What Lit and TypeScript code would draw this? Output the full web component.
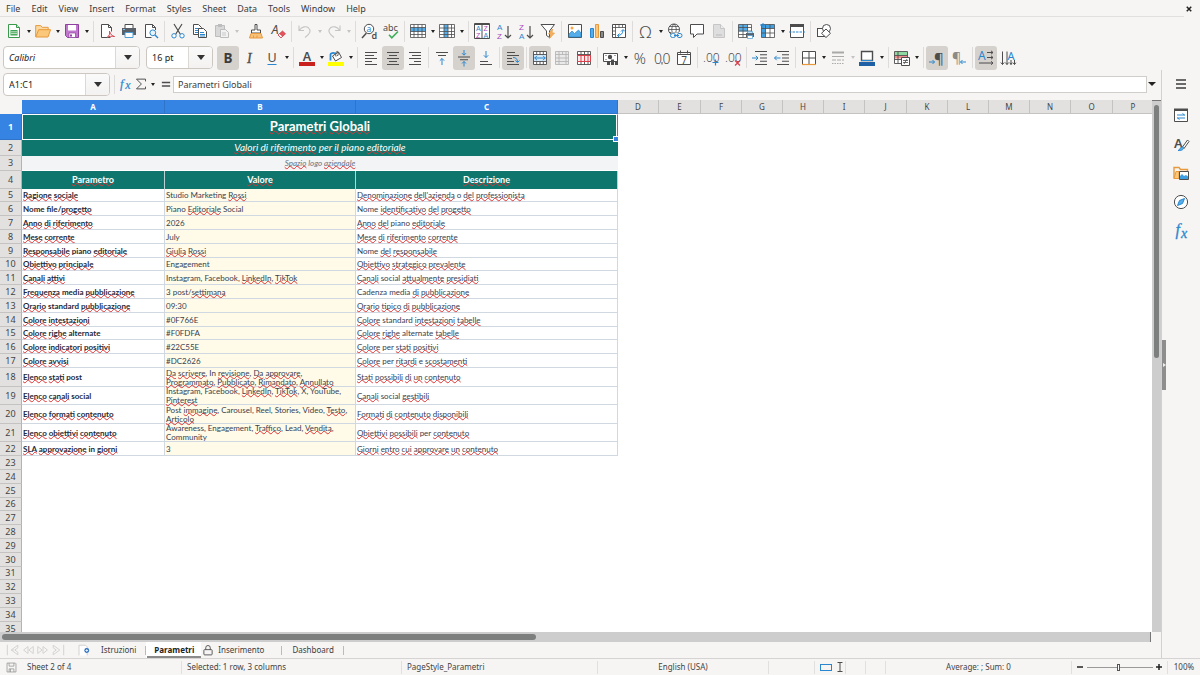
import { LitElement, html, css, svg, nothing, TemplateResult } from 'lit';
import { customElement, property, state } from 'lit/decorators.js';
import { classMap } from 'lit/directives/class-map.js';
import { styleMap } from 'lit/directives/style-map.js';

/* ---------- icons, all on a 16 x 16 grid ---------- */

const G = '#4d4d4d';
const B = '#2a87cf';
const P = '#a347ba';
const az = (a: string, b: string, ca: string, cb: string) => svg`
  <text x="1" y="7" font-size="8" font-family="Liberation Sans" fill=${ca}>${a}</text>
  <text x="1" y="16" font-size="8" font-family="Liberation Sans" fill=${cb}>${b}</text>
  <path d="M12 3v12M9 12l3 3 3-3" fill="none" stroke=${G} stroke-width="1.200"/>`;
const lines = (rows: [number, number, number][]) =>
  svg`<path d=${rows.map(([x, y, w]) => `M${x} ${y}h${w}`).join('')} fill="none" stroke=${G} stroke-width="1.1"/>`;

const ICONS: Record<string, TemplateResult<2>> = {
  new: svg`<path d="M2.500 1.500h8l3 3v10h-11z" fill="#fff" stroke="#3a9a4c"/><path d="M10.500 1.500v3h3" fill="#cfe8d2" stroke="#3a9a4c"/><path d="M4.500 7h7v5.500h-7z" fill="#3fa453"/><path d="M5 8.800h6M5 10.600h6" stroke="#fff" stroke-width=".7"/>`,
  open: svg`<path d="M.7 13.800V2.600h5l1.500 1.700h6v2.400" fill="#fbd9a0" stroke="#e8993b"/><path d="M.8 14 3.600 6.700h12L13 14z" fill="#fbc77b" stroke="#e8993b"/>`,
  save: svg`<path d="M1.500 1.500h13v13h-11l-2-2z" fill="#c078cc" stroke="#8f3fa0"/><path d="M4 2h8v5.500H4z" fill="#fff"/><path d="M5 10h6.500v4.500H5z" fill="#fff" stroke="#8f3fa0" stroke-width=".7"/><path d="M6 11.500h2v2H6z" fill="#8f3fa0"/>`,
  pdf: svg`<path d="M11.500 14.500h-9v-13h7l3 3v4" fill="#fff" stroke=${G}/><path d="M9.500 1.500v3h3" fill="none" stroke=${G}/><path d="M8 14.500c2.500-1.500 3-4 2.500-6.300 1 3.300 2.500 4.800 5 5.300-3-.7-5.500 0-7.500 1z" fill="#fff" stroke="#d9404c"/>`,
  print: svg`<path d="M4 5V1.500h8V5" fill="#fff" stroke=${G}/><path d="M1 5h14v7H1z" fill="#5a6068"/><path d="M4 9.500h8v5H4z" fill="#fff" stroke="#4c9bd4"/><path d="M2 6.500h2" stroke="#7fc0ee"/>`,
  preview: svg`<path d="M12.500 7V4.500l-3-3h-7v13h6" fill="#fff" stroke=${G}/><path d="M9.500 1.500v3h3" fill="none" stroke=${G}/><circle cx="9.800" cy="9.800" r="2.900" fill="#e8f3fb" stroke=${B}/><path d="m12 12 3 3" stroke=${B} stroke-width="1.400"/>`,
  cut: svg`<path d="m4 1 6.500 10.500M12 1 5.500 11.500" stroke=${G} stroke-width="1.200"/><circle cx="4" cy="12.800" r="2.200" fill="#fff" stroke=${B}/><circle cx="12" cy="12.800" r="2.200" fill="#fff" stroke=${B}/>`,
  copy: svg`<path d="M1.500 1.500h5l3 3v7h-8z" fill="#fff" stroke=${G}/><path d="M3 5.500h4M3 7.500h4M3 9.500h3" stroke=${B}/><path d="M6.500 5.500h5l3 3v6h-8z" fill="#fff" stroke=${G}/><path d="M8 9.500h4M8 11.500h5M8 13h5" stroke=${B}/>`,
  paste: svg`<path d="M1.500 2.500h9v11h-9z" fill="#d8d8d8" stroke="#bdbdbd"/><path d="M4 1h4v3H4z" fill="#bdbdbd"/><path d="M6.500 6.500h5l3 3v5h-8z" fill="#f2f2f2" stroke="#bdbdbd"/><path d="M8 10h4M8 12h4" stroke="#c9c9c9"/>`,
  brush: svg`<path d="M7 1.500h2V7h3.500v3h-9V7H7z" fill="#fff" stroke=${G}/><path d="M3 10.500h10L14.500 15h-13z" fill="#f9c27b" stroke="#e8993b"/><path d="M5.500 12.500V15M9 12.500V15" stroke="#e8993b"/>`,
  clear: svg`<text x="1.500" y="11" font-size="12.500" font-style="italic" font-family="Noto Sans" fill=${G}>A</text><path d="m8 12 4.500-4 3 2.800-4.500 4z" fill="#e8515a" stroke="#c23540" stroke-width=".7"/><path d="m8 12 1.600-1.400 3 2.700L11 14.800z" fill="#fff" stroke="#c23540" stroke-width=".7"/>`,
  undo: svg`<path d="M2 2.500v5h5M2.300 7.300C5 3.500 9 2.800 11.500 4.800c2.800 2.400 2 6-3.500 9.700" fill="none" stroke="#c4c4c4" stroke-width="1.100"/>`,
  redo: svg`<path d="M14 2.500v5H9M13.700 7.300C11 3.500 7 2.800 4.500 4.800c-2.800 2.400-2 6 3.500 9.700" fill="none" stroke="#c4c4c4" stroke-width="1.100"/>`,
  find: svg`<path d="M1 15l4.300-4.700" stroke=${G} stroke-width="1.500"/><circle cx="8" cy="6" r="4.700" fill="#fff" stroke=${G}/><text x="5.600" y="8.600" font-size="8.500" font-family="Noto Sans" fill=${B}>a</text><text x="10.400" y="15.500" font-size="9" font-weight="600" font-family="Noto Sans" fill=${G}>d</text>`,
  spell: svg`<text x="0" y="7.500" font-size="9" font-family="Noto Sans" fill=${G}>abc</text><path d="m6 11.800 2.800 3L15 8.500" fill="none" stroke="#3fae5a" stroke-width="1.600"/>`,
  row: svg`<path d="M.5 1.500h15v13H.5z" fill="#fff"/><path d="M.5 4.500h15v4H.5z" fill="#55aeea"/><path d="M.5 1.500h15v13H.5zM.5 4.500h15M.5 8.500h15M.5 11.500h15M4 1.500v13M8 1.500v13M12 1.500v13" fill="none" stroke=${G} stroke-width=".8"/>`,
  col: svg`<path d="M.5 1.500h15v13H.5z" fill="#fff"/><path d="M5 1.500h4v13H5z" fill="#55aeea"/><path d="M.5 1.500h15v13H.5zM.5 5h15M.5 8.500h15M.5 11.500h15M5 1.500v13M9 1.500v13M12.500 1.500v13" fill="none" stroke=${G} stroke-width=".8"/>`,
  sort: svg`<path d="M.5.500h15v15H.5z" fill="#fff" stroke=${G}/><path d="M.5 1.500h15M8 .5v15" stroke=${G}/><text x="2" y="8" font-size="7" font-family="Liberation Sans" fill=${B}>A</text><text x="2" y="15" font-size="7" font-family="Liberation Sans" fill=${P}>Z</text><text x="9.600" y="8" font-size="7" font-family="Liberation Sans" fill=${P}>Z</text><text x="9.600" y="15" font-size="7" font-family="Liberation Sans" fill=${B}>A</text>`,
  asc: az('A', 'Z', B, P),
  desc: az('Z', 'A', P, B),
  filter: svg`<path d="M1 1.500h13.500L9.500 8v6.500l-3-2V8z" fill="#fff" stroke=${G}/><path d="M12.500 6 8.500 11h2.500l-1.500 4.500L14.500 10H12z" fill="#f9b25c" stroke="#e8993b" stroke-width=".7"/>`,
  image: svg`<path d="M1.500 1.500h13v13h-13z" fill="#fff" stroke=${G}/><circle cx="5" cy="5" r="1.500" fill="#f6a848"/><path d="M2 14V11l3-3 2.500 2.500L11.500 7 14 10v4z" fill="#55aeea" stroke=${B} stroke-width=".7"/>`,
  chart: svg`<path d="M1.500 5.500h3v9h-3z" fill="#55aeea" stroke=${B}/><path d="M6.500 1.500h3v13h-3z" fill="#fbc77b" stroke="#e8993b"/><path d="M11.500 8.500h3v6h-3z" fill="#8a8a8a" stroke=${G}/>`,
  pivot: svg`<path d="M1.500 1.500h13v13h-13z" fill="#fff" stroke=${G}/><path d="M1.500 4.500h13M4.500 1.500v13M8 1.500v3M11.500 1.500v3M1.500 8h3M1.500 11.500h3" stroke=${G} stroke-width=".8"/><path d="M6.500 12.500c3.500 0 5.500-2 5.500-5.500M10 8.500 12 6.500l2 2M8.500 10.500l-2 2 2 2" fill="none" stroke=${B}/>`,
  omega: svg`<text x="1.500" y="14.500" font-size="17" font-family="Noto Sans" font-weight="300" fill=${G}>Ω</text>`,
  link: svg`<circle cx="7" cy="6.500" r="5.500" fill="#fff" stroke=${G}/><path d="M1.500 6.500h11M2.500 3.500h9M2.500 9.500h9M7 1c-3 3-3 8 0 11M7 1c3 3 3 8 0 11" fill="none" stroke=${G} stroke-width=".8"/><path d="M4 9.500h11.500V16H4z" fill="#f6f5f4"/><rect x="3.500" y="10.500" width="5" height="4" rx="2" fill="none" stroke=${B}/><rect x="10" y="10.500" width="5" height="4" rx="2" fill="none" stroke=${B}/><path d="M7 12.500h5" stroke=${B}/>`,
  comment: svg`<path d="M1.500 1.500h13v9.500H8l-3.500 3.500V11h-3z" fill="#fff" stroke=${G}/>`,
  header: svg`<path d="M2.500 1.500h7l4 4v9h-11z" fill="#dedede" stroke="#c6c6c6"/><path d="M9.500 1.500v4h4" fill="#eee" stroke="#c6c6c6"/><path d="M5 12h6" stroke="#bbb"/>`,
  parea: svg`<path d="M.5 1.500h13v13H.5z" fill="#fff"/><path d="M.5 1.500h9v7h-9z" fill="#55aeea"/><path d="M.5 1.500h13v13H.5zM.5 4.500h13M.5 8h13M.5 11.500h13M5 1.500v13M9.500 1.500v13" fill="none" stroke=${G} stroke-width=".8"/><path d="M8 10h8v4H8z" fill="#5a6068"/><path d="M9.500 8.500h5V10h-5zM9.500 12.500h5v3h-5z" fill="#fff" stroke="#4c9bd4" stroke-width=".7"/>`,
  freeze: svg`<path d="M1.500 1.500h13v13h-13z" fill="#fff"/><path d="M1.500 1.500h13v4h-9v9h-4z" fill="#3f9fe2"/><path d="M1.500 1.500h13v13h-13zM1.500 5.500h13M1.500 10h13M5.500 1.500v13M10 1.500v13" fill="none" stroke=${G} stroke-width=".8"/><path d="M0 2h6M3 0v5" stroke=${B}/>`,
  split: svg`<path d="M1.500 2.500h13v12h-13z" fill="#fff" stroke=${G}/><path d="M1 1h14v3H1z" fill=${G}/><path d="M0 9h16" stroke=${B} stroke-dasharray="2.500 1"/>`,
  shapes: svg`<rect x="1.500" y="5.500" width="7" height="8" fill="#fff" stroke=${G}/><circle cx="10.500" cy="5.500" r="4" fill="#fff" stroke=${G}/><path d="m10 6 4.500 4.300-4.500 4.200-4.500-4.200z" fill="#fff" stroke=${G}/>`,

  bold: svg`<text x="3.500" y="13" font-size="13.500" font-weight="700" font-family="Noto Sans" fill="#3c3c3c">B</text>`,
  italic: svg`<text x="5" y="13" font-size="14" font-style="italic" font-family="Liberation Serif" fill=${G} stroke=${G} stroke-width=".3">I</text>`,
  underline: svg`<text x="3.500" y="12" font-size="12.500" font-family="Noto Sans" fill=${G}>U</text><path d="M3.500 14.500h9" stroke=${B}/>`,
  fontcolor: svg`<text x="3.800" y="10.500" font-size="12.500" font-weight="600" font-family="Noto Sans" fill=${G}>A</text><path d="M0 12h16v4H0z" fill="#c9211e"/>`,
  fill: svg`<path d="m4.500 6 6-4 3 5.500-6 3.500z" fill="#fff" stroke=${G}/><path d="M8 6.500C7 3 8.500 1 9.500 1.500s1 2.500 0 4.500" fill="none" stroke=${G}/><path d="M2.500 10.500V4.500c0-1.500 3-2 4.500-1" fill="none" stroke=${B} stroke-width="1.800"/><path d="M0 12h16v4H0z" fill="#ff0"/>`,
  left: lines([[2, 2.5, 12], [2, 5.5, 9], [2, 8.5, 12], [2, 11.5, 7], [2, 14.5, 12]]),
  center: lines([[2, 2.5, 12], [4, 5.5, 8], [2, 8.5, 12], [4, 11.5, 8], [2, 14.5, 12]]),
  right: lines([[2, 2.5, 12], [5, 5.5, 9], [2, 8.5, 12], [7, 11.5, 7], [2, 14.5, 12]]),
  top: svg`${lines([[2, 2.5, 12], [4, 5.5, 8]])}<path d="M8 15V8.500M5.800 10.700 8 8.500l2.200 2.200" fill="none" stroke=${B}/>`,
  middle: svg`${lines([[2, 7, 12], [4, 9.8, 8]])}<path d="M8 0v5M6 3.200l2 2 2-2M8 16.500v-5M6 13.500l2-2 2 2" fill="none" stroke=${B}/>`,
  bottom: svg`${lines([[2, 11.5, 8], [2, 14.500, 12]])}<path d="M8 1v6.500M5.800 5.300 8 7.500l2.200-2.200" fill="none" stroke=${B}/>`,
  wrap: svg`${lines([[2, 2.5, 8], [2, 5.5, 12], [2, 8.5, 5], [2, 11.5, 7], [2, 14.5, 12]])}<path d="M8 7.500c3 0 4.500 1.500 4.500 4.500M10.300 10.500l2.200 2 2-2" fill="none" stroke=${B}/>`,
  merge: svg`<path d="M1.500 1.500h13v13h-13z" fill="#fff"/><path d="M1.500 1.500h13v13h-13zM1.500 4.500h13M1.500 11.500h13M4.700 1.500v3M8 1.500v3M11.300 1.500v3M4.700 11.500v3M8 11.500v3M11.300 11.500v3" fill="none" stroke=${G} stroke-width=".9"/><path d="M2 5h12v6H2z" fill="#cfe7f8"/><path d="M2.500 8h11M5 5.800 2.800 8 5 10.200M11 5.800 13.200 8 11 10.200" fill="none" stroke=${B}/>`,
  mergecells: svg`<path d="M1.500 1.500h13v13h-13zM1.500 4.500h13M1.500 8h13M1.500 11.500h13M5 1.500v13M8.500 1.500v3M12 1.500v13" fill="#e9e9e9" stroke="#b5b5b5" stroke-width=".9"/>`,
  unmerge: svg`<path d="M1.500 1.500h13v13h-13z" fill="#fff"/><path d="M1.500 1.500h13v13h-13zM1.500 4.500h13M5 1.500v3M8.500 1.500v3M12 1.500v3M5 12v2.500M8.500 12v2.500M12 12v2.500" fill="none" stroke=${G} stroke-width=".9"/><path d="M1.500 5.500h13v6h-13zM5 5.500v6M8.500 5.500v6M12 5.500v6" fill="#fdecec" stroke="#d9404c"/>`,
  currency: svg`<path d="M.5 3.500h14v8H.5z" fill="#fff" stroke=${G}/><circle cx="7" cy="7" r="2.200" fill=${G}/><path d="M2.500 5.500h1M11.500 5.500h1M2.500 9.500h1" stroke=${G}/><path d="M4 12h3v3H4zM8 9.500h3V15H8zM12 11h3v4h-3z" fill=${G}/>`,
  percent: svg`<text x="1.800" y="13.500" font-size="15" font-family="Noto Sans" font-weight="300" fill=${G}>%</text>`,
  number: svg`<text x="0" y="13.500" font-size="14" font-family="Noto Sans" font-weight="300" fill=${G}>0</text><text x="8.500" y="13.500" font-size="14" font-family="Noto Sans" font-weight="300" fill=${G}>0</text><path d="M8 12v2.500" stroke=${G}/>`,
  date: svg`<path d="M1.500 2.500h13v12h-13z" fill="#fff" stroke=${G}/><path d="M1.500 4.500h13M4.500.5v3M11.500.5v3" stroke=${G}/><text x="5.200" y="13.600" font-size="10" font-family="Noto Sans" fill=${G}>7</text>`,
  adddec: svg`<text x="0" y="12" font-size="12" font-family="Noto Sans" font-weight="300" fill=${G}>.00</text><path d="M12.500 9.500v6M9.500 12.500h6" stroke=${B} stroke-width="1.200"/>`,
  deldec: svg`<text x="0" y="12" font-size="12" font-family="Noto Sans" font-weight="300" fill=${G}>.00</text><path d="m10 10.500 5 5M15 10.500l-5 5" stroke="#d9404c" stroke-width="1.200"/>`,
  indent: svg`${lines([[3, 1.5, 12], [8, 4.800, 7], [8, 8, 7], [8, 11.2, 7], [3, 14.5, 12]])}<path d="M0 8h6M3.800 5.800 6 8l-2.200 2.200" fill="none" stroke=${B}/>`,
  outdent: svg`${lines([[3, 1.5, 12], [8, 4.800, 7], [8, 8, 7], [8, 11.2, 7], [3, 14.5, 12]])}<path d="M.5 8h6M2.700 5.800.5 8l2.200 2.200" fill="none" stroke=${B}/>`,
  border: svg`<path d="M1.500 14V1.500h13V14M8 1.500v13M1.500 8h13" fill="#fff" stroke=${G}/><path d="M1 14.500h14" stroke="#e8993b" stroke-width="1.200"/>`,
  bstyle: svg`<path d="M2 1.500h12v2H2z" fill="#a9a9a9"/><path d="M2 6.500h12" stroke="#aaa"/><path d="M2 10h12" stroke="#aaa" stroke-dasharray="4 1"/><path d="M2 13.500h12" stroke="#aaa" stroke-dasharray="1.500 1"/>`,
  bcolor: svg`<path d="M2.500 1.500h11v9h-11z" fill="#fff" stroke=${G} stroke-width="1.400"/><path d="M2.500 10.500h11" stroke=${B}/><path d="M0 12h16v4H0z" fill="#1f5fa6"/>`,
  cond: svg`<path d="M.5 1.500h13v12H.5z" fill="#fff"/><path d="M1 2h12v3H1z" fill="#8ed8a0"/><path d="M1 5.500h12v3H1z" fill="#f28b8b"/><path d="M.5 1.500h13v12H.5zM.5 5.500h13M.5 9.500h13M4 1.500v12" fill="none" stroke=${G} stroke-width=".9"/><path d="M7.500 7.500h8v8h-8z" fill="#fff" stroke=${G}/><path d="M9 10.500h5M9 12.500h5M13 9l-3 5" stroke=${G} stroke-width=".8"/>`,
  ltr: svg`<text x="5" y="13.500" font-size="15" font-family="Noto Sans" fill=${G}>¶</text><path d="M0 12h5.500M3.500 10l2 2-2 2" fill="none" stroke=${B}/>`,
  rtl: svg`<text x="1" y="13" font-size="14" font-family="Noto Sans" fill="#8a8a8a">¶</text><path d="M15 12H9.500M11.500 10l-2 2 2 2" fill="none" stroke=${B}/>`,
  horiz: svg`<text x="0" y="9.500" font-size="12" font-family="Noto Sans" fill=${B}>A</text><path d="M9 2.500h6M9 7.500h6M1 13h14M13 .8l2 1.700-2 1.700M13 5.800l2 1.700-2 1.700M13 11.300l2 1.700-2 1.700" fill="none" stroke=${G}/>`,
  vert: svg`<text x="7.500" y="9.500" font-size="11" font-family="Noto Sans" fill=${B}>A</text><path d="M2.500 1.500v13M7 1.500v13M11 10v4.500M14.500 10v4.500M.8 12.500l1.700 2 1.700-2M5.300 12.500l1.700 2 1.700-2M9.800 12.700l1.200 1.800 1.200-1.800M13 12.700l1.500 1.800 1.400-1.800" fill="none" stroke=${G}/>`,

  fx: svg`<text x="0" y="13" font-size="17" font-style="italic" font-family="Liberation Serif" fill=${B} stroke=${B} stroke-width=".3">f</text><text x="7" y="15" font-size="16" font-style="italic" font-family="Liberation Serif" fill=${B} stroke=${B} stroke-width=".3">x</text>`,
  sigma: svg`<path d="M14 4.500V1.500H2L8.500 8 2 14.500h12v-3" fill="none" stroke=${G} stroke-width="1.300"/>`,
  equals: svg`<path d="M2.500 6h11M2.500 10.500h11" stroke=${G} stroke-width="2"/>`,
  menu: svg`<path d="M3 4h10M3 8h10M3 12h10" stroke="#3c3c3c" stroke-width="1.400"/>`,
  props: svg`<path d="M1.500 2.500h13v12h-13z" fill="#fff" stroke=${G}/><path d="M1 1.500h14v2.500H1z" fill=${G}/><path d="M4 8h8M4 11h8M9.500 6.500l2 1.500M6.500 12.500l-2-1.500" stroke=${B}/>`,
  styles: svg`<text x="1" y="11.500" font-size="13" font-weight="600" font-family="Noto Sans" fill=${G}>A</text><path d="m14.500 4-5 7 1.500 1.500 5-7z" fill="#fff" stroke=${G}/><path d="M5 14.500c2 0 2-4 4.500-3.500 2 .7 1 4-4.500 3.500z" fill="#55aeea" stroke=${B}/>`,
  gallery: svg`<path d="M1 13.500v-11h5l1.500 2h7v2" fill="none" stroke="#e8993b" stroke-width="1.400"/><path d="M1 13.500 3 6.500h3v7z" fill="#fbc77b" stroke="#e8993b"/><path d="M6.500 6.500h9v8h-9z" fill="#fff" stroke=${G}/><path d="M7 14v-3l2-2 2 2 2-1 2 1.500V14z" fill="#3f9fe2"/>`,
  navigator: svg`<circle cx="8" cy="8" r="6.600" fill="#fff" stroke=${G}/><path d="m11.500 4.500-2 5-5 2 2-5z" fill="#55aeea" stroke=${B}/>`,
  fxbig: svg`<text x="2.500" y="12" font-size="16" font-style="italic" font-family="Liberation Serif" fill=${B} stroke=${B} stroke-width=".3">f</text><text x="8" y="14.500" font-size="14" font-style="italic" font-family="Liberation Serif" fill=${B} stroke=${B} stroke-width=".3">x</text>`,

  first: svg`<path d="M1.500 2v12M13.500 2.500 6 8l7.500 5.500v-3L10 8l3.500-2.500zM6 8h3" fill="none" stroke="#cfcecd"/>`,
  prev: svg`<path d="m8 4-5 4 5 4zM14 4 9 8l5 4z" fill="none" stroke="#cfcecd"/>`,
  next: svg`<path d="m2 4 5 4-5 4zM8 4l5 4-5 4z" fill="none" stroke="#cfcecd"/>`,
  last: svg`<path d="M14.500 2v12M2.500 2.500 10 8l-7.500 5.500v-3L6 8 2.500 5.500z" fill="none" stroke="#cfcecd"/>`,
  addsheet: svg`<path d="M2.500 14V1.500h8l2 2V14" fill="#fff" stroke="#c9c8c7"/><circle cx="12" cy="8" r="3" fill="#2a6fbf"/><path d="M12 6.300v3.400M10.300 8h3.400" stroke="#fff"/>`,
  lock: svg`<rect x="2.500" y="7.500" width="11" height="7" rx="1" fill="none" stroke=${G} stroke-width="1.200"/><path d="M5 7.500V5a3 3 0 0 1 6 0v2.500" fill="none" stroke=${G} stroke-width="1.200"/>`,
  doc: svg`<path d="M1.500 1.500h12l1 1v12h-13z" fill="none" stroke="#8a8a8a"/><path d="M4.500 1.500v4.500h7V1.500M4.500 14.500V10h7v4.500M6.500 10v4.500" fill="none" stroke="#8a8a8a"/>`,
};

const icon = (name: string) => html`<svg class="ico" viewBox="0 0 16 16" aria-hidden="true">${ICONS[name]}</svg>`;

/* ---------- toolbars: "name" is a button, "+" adds an arrow, "!" is pressed, "-" is disabled, "|" divides, " " is a gap ---------- */

const STANDARD = ['new+', 'open+', 'save+', '|', 'pdf', 'print', 'preview', '|', 'cut', 'copy', 'paste+-', ' ', 'brush', 'clear', '|',
  'undo+-', 'redo+-', '|', 'find', 'spell', '|', 'row+', 'col+', '|', 'sort', 'asc', 'desc', 'filter', '|', 'image', 'chart', 'pivot', '|',
  'omega+', 'link', 'comment', 'header-', '|', 'parea', 'freeze+', 'split', '|', 'shapes'];

const FORMATTING = ['bold!', 'italic', 'underline+', '|', 'fontcolor+', 'fill+', '|', 'left', 'center!', 'right', '|', 'top', 'middle!', 'bottom', '|',
  'wrap!', '|', 'merge!', 'mergecells-', 'unmerge', '|', 'currency+', 'percent', 'number', 'date', '|', 'adddec', 'deldec', '|', 'indent', 'outdent', '|',
  'border+', 'bstyle+-', 'bcolor+', '|', 'cond+', '|', 'ltr!', 'rtl', '|', 'horiz!', 'vert'];

@customElement('tool-strip')
export class ToolStrip extends LitElement {
  @property({ attribute: false }) items: string[] = [];

  static styles = css`
    :host { display: flex; align-items: center; }
    button { border: 0; background: none; padding: 0; margin: 0; flex: none; display: flex; align-items: center; justify-content: center; }
    .tool { width: 22px; height: 24px; border-radius: 3px; }
    .pressed { background: #d5d1cd; }
    .ico { width: 16px; height: 16px; overflow: visible; }
    .drop { width: 7px; height: 24px; }
    .drop::after { content: ''; border: 2px solid transparent; border-top: 3px solid #222; border-bottom: 0; }
    .off::after { border-top-color: #c4c4c4; }
    .sep { width: 1px; height: 21px; margin: 0 2px; background: #dedcda; flex: none; }
    .gap { width: 5px; flex: none; }
    .drop + .sep { margin-left: 3px; }
  `;

  render() {
    return this.items.map((item) => {
      if (item === '|') return html`<span class="sep"></span>`;
      if (item === ' ') return html`<span class="gap"></span>`;
      const name = item.replace(/[^a-z]/g, '');
      const off = item.includes('-');
      return html`<button class=${classMap({ tool: true, pressed: item.includes('!') })} aria-label=${name} ?disabled=${off}>${icon(name)}</button>${
        item.includes('+') ? html`<button class=${classMap({ drop: true, off })} aria-label="${name} options" ?disabled=${off}></button>` : nothing}`;
    });
  }
}

/* ---------- sheet ---------- */

const DICTIONARY = new Set(('Studio Marketing Piano piano Social social media post standard alternate per logo e o in In Nome file July Engagement ' +
  'Instagram Facebook X YouTube Carousel Reel Stories Video Awareness Lead Community Cadenza Post').split(' '));

const checked = (text: string) =>
  text.startsWith('#')
    ? text
    : text.split(/([A-Za-z']+)/).map((w, i) => (i % 2 && !DICTIONARY.has(w) ? html`<span class="typo">${w}</span>` : w));

const ROWS: [string, string, string][] = [
  ['Ragione sociale', 'Studio Marketing Rossi', "Denominazione dell'azienda o del professionista"],
  ['Nome file/progetto', 'Piano Editoriale Social', 'Nome identificativo del progetto'],
  ['Anno di riferimento', '2026', 'Anno del piano editoriale'],
  ['Mese corrente', 'July', 'Mese di riferimento corrente'],
  ['Responsabile piano editoriale', 'Giulia Rossi', 'Nome del responsabile'],
  ['Obiettivo principale', 'Engagement', 'Obiettivo strategico prevalente'],
  ['Canali attivi', 'Instagram, Facebook, LinkedIn, TikTok', 'Canali social attualmente presidiati'],
  ['Frequenza media pubblicazione', '3 post/settimana', 'Cadenza media di pubblicazione'],
  ['Orario standard pubblicazione', '09:30', 'Orario tipico di pubblicazione'],
  ['Colore intestazioni', '#0F766E', 'Colore standard intestazioni tabelle'],
  ['Colore righe alternate', '#F0FDFA', 'Colore righe alternate tabelle'],
  ['Colore indicatori positivi', '#22C55E', 'Colore per stati positivi'],
  ['Colore avvisi', '#DC2626', 'Colore per ritardi e scostamenti'],
  ['Elenco stati post', 'Da scrivere, In revisione, Da approvare, Programmato, Pubblicato, Rimandato, Annullato', 'Stati possibili di un contenuto'],
  ['Elenco canali social', 'Instagram, Facebook, LinkedIn, TikTok, X, YouTube, Pinterest', 'Canali social gestibili'],
  ['Elenco formati contenuto', 'Post immagine, Carousel, Reel, Stories, Video, Testo, Articolo', 'Formati di contenuto disponibili'],
  ['Elenco obiettivi contenuto', 'Awareness, Engagement, Traffico, Lead, Vendita, Community', 'Obiettivi possibili per contenuto'],
  ['SLA approvazione in giorni', '3', 'Giorni entro cui approvare un contenuto'],
];

/* Sizes are in tenths of a pixel; edges are rounded so that each line falls on a whole pixel. */
const snap = (sizes: number[]) => {
  let at = 0;
  return sizes.map((s) => {
    const from = Math.round(at / 10);
    at += s;
    return Math.round(at / 10) - from;
  });
};
const LETTERS = 'ABCDEFGHIJKLMNOP'.split('');
const COL_WIDTHS = snap([1430, 1910, 2622, ...Array(13).fill(412)]);
const ROW_HEIGHTS = snap([258, 158, 150, 180, ...Array(13).fill(138), 186, 186, 186, 186, ...Array(14).fill(138)]);

@customElement('sheet-grid')
export class SheetGrid extends LitElement {
  static styles = css`
    :host { display: block; flex: 1; min-width: 0; overflow: hidden; background: #fff; }
    .grid { border-collapse: separate; border-spacing: 0; table-layout: fixed; width: 0; font: 8px/9px Lato, Carlito, sans-serif; color: #374151; }
    th, td { padding: 0; box-sizing: border-box; }
    .corner-col { width: 22px; }
    .colhead, .rowhead { font: 8px/10px 'Noto Sans', sans-serif; color: #444; background: #e2e1e0; border-right: 1px solid #c4c3c2; border-bottom: 1px solid #c4c3c2; text-align: center; }
    .corner { background: #f6f5f4; }
    .colhead { height: 14px; }
    .rowhead { font-size: 9px; border-right-color: #b4b3b2; }
    .on { background: #3584e4; color: #fff; font-weight: 700; border-color: #2f74c9; }
    .title, .sub, .label { background: #0f766e; color: #fff; text-align: center; padding-bottom: 2px; }
    .title { position: relative; font-size: 13px; line-height: 18px; font-weight: 700; border: 1px solid #fff; border-right-color: #3584e4; box-shadow: inset -1px 0 #fff; }
    .handle { position: absolute; right: -2px; bottom: -3px; width: 4px; height: 4px; background: #3584e4; border: 1px solid #fff; box-sizing: content-box; }
    .sub { font-size: 10px; line-height: 12px; font-style: italic; }
    .logo { background: #f3f4f6; color: #6b7280; font-style: italic; text-align: center; border-bottom: 1px solid #fff; }
    .label { font-size: 9px; line-height: 11px; border-right: 1px solid #b9d3d4; }
    .name, .value, .desc { text-align: left; padding: 0 4px 0 1px; box-shadow: inset -1px -1px #d0d8e2; vertical-align: middle; }
    .name { font-weight: 700; color: #1f2937; }
    .value { background: #fffbe8; }
    .typo { text-decoration: underline wavy #e03131 1px; text-underline-offset: -1px; text-decoration-skip-ink: none; }
  `;

  private cells(row: number) {
    if (row === 1) return html`<td class="title" colspan="3">${checked('Parametri Globali')}<span class="handle"></span></td>`;
    if (row === 2) return html`<td class="sub" colspan="3">${checked('Valori di riferimento per il piano editoriale')}</td>`;
    if (row === 3) return html`<td class="logo" colspan="3">${checked('Spazio logo aziendale')}</td>`;
    if (row === 4) return ['Parametro', 'Valore', 'Descrizione'].map((t) => html`<th class="label" scope="col">${checked(t)}</th>`);
    const data = ROWS[row - 5];
    if (!data) return nothing;
    return html`<td class="name">${checked(data[0])}</td><td class="value">${checked(data[1])}</td><td class="desc">${checked(data[2])}</td>`;
  }

  render() {
    return html`<table class="grid">
      <colgroup><col class="corner-col" />${COL_WIDTHS.map((w) => html`<col style=${styleMap({ width: `${w}px` })} />`)}</colgroup>
      <thead><tr><td class="corner"></td>${LETTERS.map((l, i) => html`<th scope="col" class=${classMap({ colhead: true, on: i < 3 })}>${l}</th>`)}</tr></thead>
      <tbody>${ROW_HEIGHTS.map((h, i) => html`<tr style=${styleMap({ height: `${h}px` })}>
        <th scope="row" class=${classMap({ rowhead: true, on: i === 0 })}>${i + 1}</th>${this.cells(i + 1)}</tr>`)}</tbody>
    </table>`;
  }
}

/* ---------- window ---------- */

@customElement('app-root')
export class AppRoot extends LitElement {
  @state() private sheet = 'Parametri';

  static styles = css`
    :host { display: flex; flex-direction: column; height: 100vh; overflow: hidden; background: #f6f5f4; color: #3c3c3c; font: 9px/12px 'Noto Sans', sans-serif; }
    button, input, select { font: inherit; color: inherit; margin: 0; box-sizing: border-box; }
    button { border: 0; background: none; padding: 0; flex: none; display: flex; align-items: center; justify-content: center; }
    .ico { width: 16px; height: 16px; overflow: visible; flex: none; }
    .menubar { display: flex; align-items: center; gap: 11px; height: 17px; box-sizing: border-box; padding: 2px 0 0 6px; margin-right: 16px; border-bottom: 1px solid #e2e0de; flex: none; }
    .menubar .close { margin: 0 -10px 0 auto; width: 10px; height: 10px; }
    .close .ico { width: 6px; height: 6px; }
    .bar { display: flex; align-items: center; height: 25px; padding-left: 3px; flex: none; }
    .bar.std { height: 28px; }
    .combo { position: relative; display: flex; height: 23px; margin-right: 6px; border: 1px solid #cdc7c2; border-radius: 4px; background: #fff; box-sizing: border-box; overflow: hidden; flex: none; }
    .combo select, .combo input { appearance: none; border: 0; background: none; outline: 0; padding: 0 5px; width: 100%; height: 100%; font-size: 9px; color: #222; }
    .combo::after { content: ''; position: absolute; right: 0; top: 0; bottom: 0; width: 23px; border-left: 1px solid #dcd8d4; background: linear-gradient(#fbfafa, #f3f2f1); pointer-events: none; }
    .combo::before { content: ''; position: absolute; z-index: 1; right: 7px; top: 8px; border: 4px solid transparent; border-top: 5px solid #333; border-bottom: 0; pointer-events: none; }
    .font { width: 137px; font-style: italic; }
    .size { width: 67px; margin-right: 4px; }
    .cellref { width: 107px; margin-right: 4px; }
    .middle { display: flex; flex: 1; min-height: 0; }
    .main { display: flex; flex-direction: column; flex: 1; min-width: 0; }
    .formulabar { display: flex; align-items: center; height: 30px; padding: 0 4px 2px 3px; box-sizing: border-box; flex: none; }
    .rule { width: 1px; height: 19px; background: #dedcda; margin-right: 3px; }
    .fb { width: 15px; height: 22px; }
    .fb .ico { width: 12px; height: 12px; }
    .arrow::after { content: ''; border: 2px solid transparent; border-top: 3px solid #222; border-bottom: 0; }
    .arrow { width: 10px; height: 22px; }
    .arrow.big::after { border-width: 4px; border-bottom: 0; }
    .formula { flex: 1; min-width: 0; height: 17px; border: 1px solid #d0ceca; background: #fff; padding: 0 4px; outline: 0; }
    .sheetrow { display: flex; flex: 1; min-height: 0; }
    .vscroll { width: 9px; background: #cdcdcd; border-top: 1px solid #777; padding: 4px 2px 0; box-sizing: border-box; flex: none; }
    .vthumb { height: 48%; border-radius: 3px; background: #7d7f7e; }
    .hscroll { height: 10px; background: #cdcdcd; padding: 2px; box-sizing: border-box; margin-right: 10px; flex: none; border-right: 1px solid #777; }
    .hthumb { width: 46.6%; height: 6px; border-radius: 3px; background: #7d7f7e; }
    .tabs { display: flex; align-items: center; height: 17px; padding-left: 5px; border-bottom: 1px solid #d6d4d2; box-sizing: border-box; flex: none; font-size: 8px; }
    .nav { width: 15px; height: 14px; }
    .nav .ico { width: 14px; height: 14px; }
    .add { width: 16px; margin-left: 10px; }
    .add .ico { width: 13px; height: 13px; }
    .tab { height: 16px; padding: 0 9px; border-left: 1px solid transparent; }
    .tab.locked { padding: 0 17px 0 0; }
    .tab.active { background: #fff; font-weight: 700; padding: 0 7px; box-shadow: inset 0 -2px #8b8b8b; color: #222; }
    .tab .ico { width: 12px; height: 12px; margin-right: 4px; }
    .divider { width: 1px; height: 9px; background: #bdbbb9; }
    .side { display: flex; flex-direction: column; align-items: center; width: 39px; box-sizing: border-box; border-left: 1px solid #d3d1cf; border-bottom: 1px solid #d6d4d2; padding-top: 2px; position: relative; flex: none; }
    .side button { height: 29px; width: 26px; }
    .side button:first-of-type { height: 24px; margin-bottom: 4px; }
    .grip { position: absolute; left: 0; top: 46%; width: 4px; height: 50px; background: #8e8e8e; display: flex; align-items: center; justify-content: center; }
    .grip::after { content: ''; border: 2px solid transparent; border-left: 3px solid #eee; border-right: 0; }
    .status { display: flex; align-items: center; height: 16px; flex: none; font-size: 8px; line-height: 12px; color: #444; }
    .status > * { box-sizing: border-box; height: 13px; border-right: 1px solid #e2e0de; display: flex; align-items: center; flex: none; }
    .s-doc { width: 182px; padding-left: 6px; gap: 10px; }
    .s-doc .ico { width: 11px; height: 11px; }
    .s-sel { width: 220px; padding-left: 5px; }
    .s-style { width: 196px; padding-left: 5px; }
    .s-lang { width: 171px; justify-content: center; }
    .s-ins { width: 46px; }
    .s-mode { width: 31px; gap: 5px; padding-left: 5px; }
    .box { width: 12px; height: 7px; border: 1px solid #2a87cf; box-sizing: border-box; flex: none; }
    .s-mode .ico { width: 6px; height: 12px; }
    .s-small { width: 20px; }
    .status > .s-sum { flex: 1; justify-content: center; min-width: 0; }
    .s-zoom { width: 96px; gap: 2px; padding: 0 3px; justify-content: center; }
    .s-zoom button { width: 9px; height: 12px; }
    .s-zoom .ico { width: 8px; height: 8px; }
    .range { appearance: none; width: 66px; height: 9px; background: linear-gradient(#999, #999) center / 100% 1px no-repeat; }
    .range::-webkit-slider-thumb { appearance: none; width: 3px; height: 7px; border: 1px solid #555; background: #fff; box-sizing: border-box; }
    .status > .s-pct { width: 32px; border: 0; justify-content: center; }
  `;

  private tab(name: string, locked = false) {
    return html`<button role="tab" aria-selected=${this.sheet === name} class=${classMap({ tab: true, locked, active: this.sheet === name })}
      @click=${() => (this.sheet = name)}>${locked ? icon('lock') : nothing}${name}</button>`;
  }

  render() {
    return html`
      <nav class="menubar">
        ${['File', 'Edit', 'View', 'Insert', 'Format', 'Styles', 'Sheet', 'Data', 'Tools', 'Window', 'Help'].map((m) => html`<button>${m}</button>`)}
        <button class="close" aria-label="Close"><svg class="ico" viewBox="0 0 16 16"><path d="M2 2l12 12M14 2L2 14" stroke="#222" stroke-width="4" /></svg></button>
      </nav>
      <div class="bar std"><tool-strip .items=${STANDARD}></tool-strip></div>
      <div class="bar">
        <div class="combo font"><select aria-label="Font name"><option>Calibri</option></select></div>
        <div class="combo size"><select aria-label="Font size"><option>16 pt</option></select></div>
        <tool-strip .items=${FORMATTING}></tool-strip>
      </div>
      <div class="middle">
        <div class="main">
          <div class="formulabar">
            <div class="combo cellref"><input aria-label="Name box" value="A1:C1" /></div>
            <span class="rule"></span>
            <button class="fb" aria-label="Function wizard">${icon('fx')}</button>
            <button class="fb" aria-label="Sum">${icon('sigma')}</button>
            <button class="arrow" aria-label="Sum options"></button>
            <button class="fb" aria-label="Formula">${icon('equals')}</button>
            <input class="formula" aria-label="Input line" value="Parametri Globali" />
            <button class="arrow big" aria-label="Expand formula bar"></button>
          </div>
          <div class="sheetrow">
            <sheet-grid></sheet-grid>
            <div class="vscroll"><div class="vthumb"></div></div>
          </div>
          <div class="hscroll"><div class="hthumb"></div></div>
          <div class="tabs" role="tablist">
            ${['first', 'prev', 'next', 'last'].map((n) => html`<button class="nav" aria-label="${n} sheet">${icon(n)}</button>`)}
            <button class="add" aria-label="Add sheet">${icon('addsheet')}</button>
            ${this.tab('Istruzioni')}<span class="divider"></span>${this.tab('Parametri')}${this.tab('Inserimento', true)}<span class="divider"></span>${this.tab('Dashboard')}<span class="divider"></span>
          </div>
        </div>
        <aside class="side">
          ${['menu', 'props', 'styles', 'gallery', 'navigator', 'fxbig'].map((n) => html`<button aria-label=${n}>${icon(n)}</button>`)}
          <span class="grip"></span>
        </aside>
      </div>
      <footer class="status">
        <span class="s-doc">${icon('doc')}Sheet 2 of 4</span>
        <span class="s-sel">Selected: 1 row, 3 columns</span>
        <span class="s-style">PageStyle_Parametri</span>
        <span class="s-lang">English (USA)</span>
        <span class="s-ins"></span>
        <span class="s-mode"><span class="box"></span><svg class="ico" viewBox="0 0 6 12"><path d="M.5 1.500h5M3 1.500v9M.5 10.500h5" stroke="#4d4d4d" /></svg></span>
        <span class="s-small"></span><span class="s-small"></span>
        <span class="s-sum">Average: ; Sum: 0</span>
        <span class="s-zoom">
          <button aria-label="Zoom out"><svg class="ico" viewBox="0 0 8 8"><path d="M1 4h6" stroke="#222" stroke-width="1.500" /></svg></button>
          <input class="range" type="range" aria-label="Zoom" min="0" max="100" value="48" />
          <button aria-label="Zoom in"><svg class="ico" viewBox="0 0 8 8"><path d="M1 4h6M4 1v6" stroke="#222" stroke-width="1.500" /></svg></button>
        </span>
        <span class="s-pct">100%</span>
      </footer>
    `;
  }
}
